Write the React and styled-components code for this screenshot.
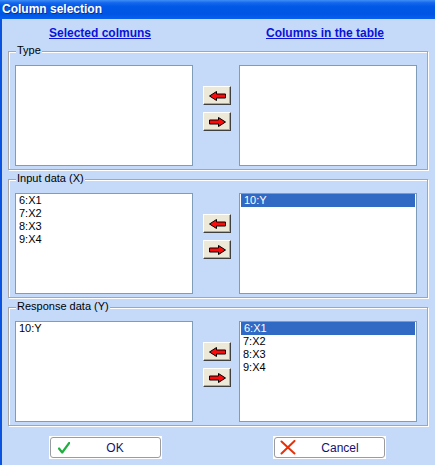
import React from "react";
import styled, { createGlobalStyle } from "styled-components";

const Global = createGlobalStyle`
  html, body { margin: 0; padding: 0; background: #C4DAF8; }
  body { font-family: "Liberation Sans", Arial, sans-serif; }
`;

const Window = styled.div`
  width: 435px;
  height: 465px;
  display: flex;
  flex-direction: column;
  background: #C4DAF8;
  overflow: hidden;
`;

const TitleBar = styled.div`
  height: 19px;
  flex: none;
  box-sizing: border-box;
  padding: 2px 0 0 2px;
  background: linear-gradient(to bottom, #3E8DF6 0%, #1466EE 15%, #0058E6 35%, #0055E5 75%, #0A60EE 100%);
  color: #fff;
  font: bold 12px/15px "Liberation Sans", Arial, sans-serif;
  text-shadow: 1px 1px 0 #0A2F9A;
`;

const Body = styled.div`
  flex: 1;
  border-left: 2px solid #0A53E0;
  padding: 7px 7px 0 6px;
  display: flex;
  flex-direction: column;
`;

const HeaderRow = styled.div`
  display: grid;
  grid-template-columns: 184px 200px;
  column-gap: 33px;
  height: 14px;
`;

const HeaderLink = styled.span`
  text-align: center;
  font: bold 12px/14px "Liberation Sans", Arial, sans-serif;
  color: #0A14D8;
  text-decoration: underline;
`;

const Groups = styled.div`
  margin-top: 11px;
  display: flex;
  flex-direction: column;
  gap: 9px;
`;

const GroupBox = styled.div`
  position: relative;
  height: 119px;
  box-sizing: border-box;
  border: 1px solid #A6A6A6;
  box-shadow: inset 1px 1px 0 #fff, 1px 1px 0 #fff;
  padding: 13px 8px 3px 6px;
  display: grid;
  grid-template-columns: 178px 28px 178px;
  column-gap: 9px;
`;

const Legend = styled.span`
  position: absolute;
  left: 7px;
  top: -8px;
  padding: 0 1px;
  background: #C4DAF8;
  font: 11px/13px "Liberation Sans", Arial, sans-serif;
  color: #000;
`;

const ListBox = styled.div`
  height: 101px;
  box-sizing: border-box;
  background: #fff;
  border: 1px solid #7F9DB9;
  padding: 0 1px;
  overflow: hidden;
`;

const Item = styled.div`
  height: 13px;
  padding-left: ${(p) => (p.$selected ? 3 : 2)}px;
  font: 11px/13px "Liberation Sans", Arial, sans-serif;
  color: ${(p) => (p.$selected ? "#fff" : "#000")};
  background: ${(p) => (p.$selected ? "#316AC5" : "transparent")};
`;

const ButtonColumn = styled.div`
  display: flex;
  flex-direction: column;
  gap: 7px;
  padding-top: 21px;
  margin-left: 1px;
`;

const ArrowButton = styled.button`
  width: 28px;
  height: 19px;
  padding: 0;
  box-sizing: border-box;
  background: #ECE9D8;
  border: 1px solid;
  border-color: #fff #404040 #404040 #fff;
  box-shadow: inset -1px -1px 0 #ACA899;
  display: flex;
  align-items: center;
  justify-content: center;
`;

const Footer = styled.div`
  margin-top: 10px;
  padding-left: 41px;
  display: flex;
  gap: 111px;
`;

const ButtonFrame = styled.div`
  background: #fff;
  padding: 1px;
  width: 113px;
  height: 23px;
  box-sizing: border-box;
`;

const DialogButton = styled.button`
  width: 100%;
  height: 100%;
  box-sizing: border-box;
  margin: 0;
  background: #fff;
  border: 1px solid #9C9C9C;
  border-radius: 3px;
  display: flex;
  align-items: center;
  padding: 0 0 0 ${(p) => p.$iconPad}px;
  font: 12px/14px "Liberation Sans", Arial, sans-serif;
  color: #12126E;
`;

const ButtonLabel = styled.span`
  flex: 1;
  text-align: center;
`;

const LeftArrow = () => (
  <svg width="17" height="10" viewBox="0 0 17 10">
    <polygon
      points="0.5,5 7.5,0.5 7.5,3 16.5,3 16.5,7 7.5,7 7.5,9.5"
      fill="#FF0A0A"
      stroke="#000"
      strokeWidth="1"
    />
  </svg>
);

const RightArrow = () => (
  <svg width="17" height="10" viewBox="0 0 17 10">
    <polygon
      points="16.5,5 9.5,0.5 9.5,3 0.5,3 0.5,7 9.5,7 9.5,9.5"
      fill="#FF0A0A"
      stroke="#000"
      strokeWidth="1"
    />
  </svg>
);

const CheckIcon = () => (
  <svg width="12" height="12" viewBox="0 0 12 12">
    <path d="M1 6.5 L4.2 10.5 L11.2 1" fill="none" stroke="#1FB040" strokeWidth="2.2" strokeLinecap="round" strokeLinejoin="round" />
  </svg>
);

const CrossIcon = () => (
  <svg width="16" height="15" viewBox="0 0 16 15">
    <path d="M1.5 1.5 L14.5 13.5 M14.5 1 L1.5 13.5" fill="none" stroke="#E5320A" strokeWidth="2" strokeLinecap="round" />
  </svg>
);

const List = ({ items, selected }) => (
  <ListBox>
    {items.map((it, i) => (
      <Item key={it} $selected={selected === i}>
        {it}
      </Item>
    ))}
  </ListBox>
);

const Group = ({ label, left, right, selected }) => (
  <GroupBox>
    <Legend>{label}</Legend>
    <List items={left} />
    <ButtonColumn>
      <ArrowButton aria-label="add">
        <LeftArrow />
      </ArrowButton>
      <ArrowButton aria-label="remove">
        <RightArrow />
      </ArrowButton>
    </ButtonColumn>
    <List items={right} selected={selected} />
  </GroupBox>
);

export default function App() {
  return (
    <>
      <Global />
      <Window>
        <TitleBar>Column selection</TitleBar>
        <Body>
          <HeaderRow>
            <HeaderLink>Selected colmuns</HeaderLink>
            <HeaderLink>Columns in the table</HeaderLink>
          </HeaderRow>
          <Groups>
            <Group label="Type" left={[]} right={[]} />
            <Group label="Input data (X)" left={["6:X1", "7:X2", "8:X3", "9:X4"]} right={["10:Y"]} selected={0} />
            <Group label="Response data (Y)" left={["10:Y"]} right={["6:X1", "7:X2", "8:X3", "9:X4"]} selected={0} />
          </Groups>
          <Footer>
            <ButtonFrame>
              <DialogButton $iconPad={7}>
                <CheckIcon />
                <ButtonLabel>OK</ButtonLabel>
              </DialogButton>
            </ButtonFrame>
            <ButtonFrame>
              <DialogButton $iconPad={5}>
                <CrossIcon />
                <ButtonLabel>Cancel</ButtonLabel>
              </DialogButton>
            </ButtonFrame>
          </Footer>
        </Body>
      </Window>
    </>
  );
}
